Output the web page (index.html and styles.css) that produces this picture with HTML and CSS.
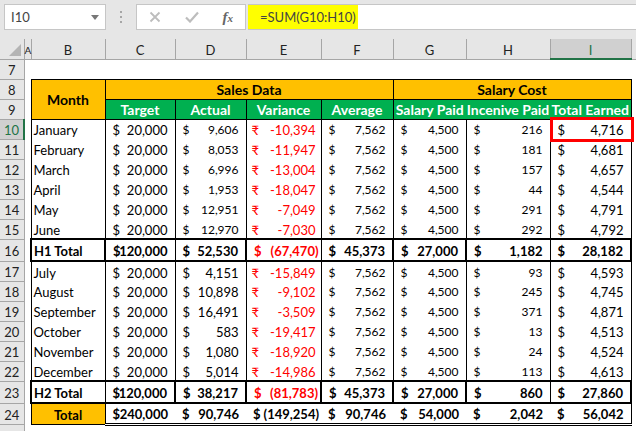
FILE: index.html
```
<!DOCTYPE html>
<html lang="en">
<head>
<meta charset="utf-8">
<title>Salary sheet</title>
<link rel="stylesheet" href="styles.css">
</head>
<body>
<header class="bar">
  <div class="namebox">
    <input class="name" type="text" value="I10" aria-label="Name box">
    <button class="drop" type="button" aria-label="Show names"><svg width="8" height="5" viewBox="0 0 8 5"><path d="M0 0h8L4 5z" fill="#777"/></svg></button>
  </div>
  <svg class="dots" width="3" height="12" viewBox="0 0 3 12"><path d="M0 0h2v2H0zM0 5h2v2H0zM0 10h2v2H0z" fill="#a6a6a6"/></svg>
  <div class="tools">
    <button type="button" aria-label="Cancel"><svg width="12" height="12" viewBox="0 0 12 12"><path d="M1.500 1.500l9 9M10.500 1.500l-9 9" stroke="#bdbdbd" stroke-width="1.800" fill="none"/></svg></button>
    <button type="button" aria-label="Enter"><svg width="14" height="12" viewBox="0 0 14 12"><path d="M1 6.500l4 4L13 1.500" stroke="#bdbdbd" stroke-width="2.200" fill="none"/></svg></button>
    <button class="fx" type="button" aria-label="Insert function"><i>f</i><i class="x">x</i></button>
  </div>
  <div class="formula"><input type="text" value="=SUM(G10:H10)" aria-label="Formula bar"></div>
</header>
<main>
<table class="sheet">
  <colgroup><col class="cn"><col class="ca"><col class="cb"><col class="cc"><col class="cd"><col class="ce"><col class="cf"><col class="cg"><col class="ch"><col class="ci"><col></colgroup>
  <thead>
    <tr class="letters"><th class="corner"><svg width="12" height="12" viewBox="0 0 12 12"><path d="M12 0v12H0z" fill="#b4b4b4"/></svg></th><th class="a">A</th><th>B</th><th>C</th><th>D</th><th>E</th><th>F</th><th>G</th><th>H</th><th class="active">I</th><th class="end"></th></tr>
  </thead>
  <tbody>
    <tr><th>7</th><td></td><td colspan="8"></td><td></td></tr>
    <tr class="group"><th>8</th><td></td><td class="gold" rowspan="2">Month</td><td class="gold" colspan="4">Sales Data</td><td class="gold" colspan="3">Salary Cost</td><td></td></tr>
    <tr class="heads"><th>9</th><td></td><td class="green">Target</td><td class="green">Actual</td><td class="green">Variance</td><td class="green">Average</td><td class="green">Salary Paid</td><td class="green open">Incenive Paid</td><td class="green open">Total Earned</td><td></td></tr>
    <tr class="data"><th class="active">10</th><td></td><td>January</td><td><span>$</span>20,000</td><td class="s"><span>$</span>9,606</td><td class="v"><span>₹</span>-10,394</td><td class="s"><span>$</span>7,562</td><td class="s"><span>$</span>4,500</td><td class="s"><span>$</span>216</td><td class="selected"><span>$</span>4,716</td><td></td></tr>
    <tr class="data"><th>11</th><td></td><td>February</td><td><span>$</span>20,000</td><td class="s"><span>$</span>8,053</td><td class="v"><span>₹</span>-11,947</td><td class="s"><span>$</span>7,562</td><td class="s"><span>$</span>4,500</td><td class="s"><span>$</span>181</td><td><span>$</span>4,681</td><td></td></tr>
    <tr class="data"><th>12</th><td></td><td>March</td><td><span>$</span>20,000</td><td class="s"><span>$</span>6,996</td><td class="v"><span>₹</span>-13,004</td><td class="s"><span>$</span>7,562</td><td class="s"><span>$</span>4,500</td><td class="s"><span>$</span>157</td><td><span>$</span>4,657</td><td></td></tr>
    <tr class="data"><th>13</th><td></td><td>April</td><td><span>$</span>20,000</td><td class="s"><span>$</span>1,953</td><td class="v"><span>₹</span>-18,047</td><td class="s"><span>$</span>7,562</td><td class="s"><span>$</span>4,500</td><td class="s"><span>$</span>44</td><td><span>$</span>4,544</td><td></td></tr>
    <tr class="data"><th>14</th><td></td><td>May</td><td><span>$</span>20,000</td><td class="s"><span>$</span>12,951</td><td class="v"><span>₹</span>-7,049</td><td class="s"><span>$</span>7,562</td><td class="s"><span>$</span>4,500</td><td class="s"><span>$</span>291</td><td><span>$</span>4,791</td><td></td></tr>
    <tr class="data"><th>15</th><td></td><td>June</td><td><span>$</span>20,000</td><td class="s"><span>$</span>12,970</td><td class="v"><span>₹</span>-7,030</td><td class="s"><span>$</span>7,562</td><td class="s"><span>$</span>4,500</td><td class="s"><span>$</span>292</td><td><span>$</span>4,792</td><td></td></tr>
    <tr class="data total"><th>16</th><td></td><td class="l r">H1 Total</td><td><span>$</span>120,000</td><td class="r"><span>$</span>52,530</td><td class="v"><span>$</span>(67,470)</td><td class="r"><span>$</span>45,373</td><td class="r"><span>$</span>27,000</td><td><span>$</span>1,182</td><td class="r"><span>$</span>28,182</td><td></td></tr>
    <tr class="data"><th>17</th><td></td><td>July</td><td><span>$</span>20,000</td><td><span>$</span>4,151</td><td class="v"><span>₹</span>-15,849</td><td class="s"><span>$</span>7,562</td><td class="s"><span>$</span>4,500</td><td class="s"><span>$</span>93</td><td><span>$</span>4,593</td><td></td></tr>
    <tr class="data"><th>18</th><td></td><td>August</td><td><span>$</span>20,000</td><td><span>$</span>10,898</td><td class="v"><span>₹</span>-9,102</td><td class="s"><span>$</span>7,562</td><td class="s"><span>$</span>4,500</td><td class="s"><span>$</span>245</td><td><span>$</span>4,745</td><td></td></tr>
    <tr class="data"><th>19</th><td></td><td>September</td><td><span>$</span>20,000</td><td><span>$</span>16,491</td><td class="v"><span>₹</span>-3,509</td><td class="s"><span>$</span>7,562</td><td class="s"><span>$</span>4,500</td><td class="s"><span>$</span>371</td><td><span>$</span>4,871</td><td></td></tr>
    <tr class="data"><th>20</th><td></td><td>October</td><td><span>$</span>20,000</td><td><span>$</span>583</td><td class="v"><span>₹</span>-19,417</td><td class="s"><span>$</span>7,562</td><td class="s"><span>$</span>4,500</td><td class="s"><span>$</span>13</td><td><span>$</span>4,513</td><td></td></tr>
    <tr class="data"><th>21</th><td></td><td>November</td><td><span>$</span>20,000</td><td><span>$</span>1,080</td><td class="v"><span>₹</span>-18,920</td><td class="s"><span>$</span>7,562</td><td class="s"><span>$</span>4,500</td><td class="s"><span>$</span>24</td><td><span>$</span>4,524</td><td></td></tr>
    <tr class="data"><th>22</th><td></td><td>December</td><td><span>$</span>20,000</td><td><span>$</span>5,014</td><td class="v"><span>₹</span>-14,986</td><td class="s"><span>$</span>7,562</td><td class="s"><span>$</span>4,500</td><td class="s"><span>$</span>113</td><td><span>$</span>4,613</td><td></td></tr>
    <tr class="data total"><th>23</th><td></td><td class="l">H2 Total</td><td class="r"><span>$</span>120,000</td><td class="r"><span>$</span>38,217</td><td class="v r"><span>$</span>(81,783)</td><td class="r"><span>$</span>45,373</td><td class="r"><span>$</span>27,000</td><td><span>$</span>860</td><td class="r"><span>$</span>27,860</td><td></td></tr>
    <tr class="data grand"><th>24</th><td></td><td class="gold">Total</td><td><span>$</span>240,000</td><td><span>$</span>90,746</td><td class="g"><span>$</span>(149,254)</td><td><span>$</span>90,746</td><td><span>$</span>54,000</td><td><span>$</span>2,042</td><td class="last"><span>$</span>56,042</td><td></td></tr>
    <tr><th></th><td></td><td colspan="8"></td><td></td></tr>
  </tbody>
</table>
</main>
</body>
</html>
```
FILE: styles.css
```
* { box-sizing: border-box; }
body {
  margin: 0;
  height: 100vh;
  overflow: hidden;
  background: #fff;
  color: #000;
  font: 13px/16px Lato, "Liberation Sans", sans-serif;
}
button, input {
  border: 0;
  padding: 0;
  background: none;
  font: inherit;
  color: #444;
}
.bar {
  display: flex;
  align-items: center;
  height: 39px;
  padding: 4px 0 9px 4px;
  background: #e6e6e6;
}
.namebox, .tools, .formula {
  display: flex;
  align-items: center;
  height: 26px;
  background: #fff;
  border: 1px solid #c6c6c6;
}
.namebox { width: 102px; padding: 0 6px; }
.name { flex: 1; min-width: 0; }
.drop { display: flex; }
.dots { margin: 0 13px 0 14px; }
.tools {
  width: 110px;
  justify-content: space-between;
  padding: 0 12px;
}
.tools button { display: flex; align-items: center; }
.tools .fx {
  align-items: baseline;
  color: #666;
  font: bold 15px/16px "Liberation Serif", serif;
}
.fx .x { font-size: 11px; }
.formula {
  flex: 1;
  margin-left: 2px;
  border-right: 0;
  border-left: 0;
}
.formula input {
  width: 110px;
  height: 24px;
  padding-left: 12px;
  background: #ff0;
}

.sheet {
  width: 100%;
  table-layout: fixed;
  border-collapse: collapse;
  white-space: nowrap;
}
.cn { width: 24px; }
.ca { width: 7px; }
.cb { width: 74px; }
.cc { width: 70px; }
.cd { width: 71px; }
.ce { width: 75px; }
.cf { width: 72px; }
.cg { width: 73px; }
.ch { width: 84px; }
.ci { width: 81px; }
.sheet tr { height: 20px; }
.sheet th, .sheet td { padding: 2px 0 0; }
.sheet th {
  background: #e6e6e6;
  border: 1px solid #a6a6a6;
  border-left: 0;
  font-weight: normal;
  color: #222;
}
.letters th { border-top: 0; }
.letters .corner { text-align: right; padding-right: 3px; }
.corner svg { display: block; margin-left: auto; }
.letters .a { font-size: 10px; }
.letters .end { border-right: 0; }
.sheet th.active { background: #d0d0d0; color: #217346; }
.letters .active { border-bottom: 2px solid #217346; }
.data .active { border-right: 2px solid #217346; }

.gold, .green {
  border: 1px solid #000;
  text-align: center;
  font-weight: bold;
}
.gold { background: #ffc000; }
.green { background: #00b050; color: #fff; }
.group td, .heads td { font-size: 14px; }
.heads .open { border-left: 0; }
.heads .green:nth-child(7) { border-right: 0; }
.heads .green:nth-child(8) { border-right: 0; }

.data td:nth-child(n+3):nth-child(-n+10) {
  padding: 2px 7px 0;
  border-left: 1px solid #000;
  border-right: 1px solid #000;
  text-align: right;
}
.data td:nth-child(3):nth-child(-n+10) { padding: 2px 2px 0; text-align: left; }
.data td span { float: left; margin-right: -12px; }
.data .s { font-size: 12px; }
.data td.v:nth-child(n+3):nth-child(-n+10) { padding: 2px 5px 0; color: #f00; }

.total, .grand { font-weight: bold; }
.sheet .total { height: 22px; }
.sheet .grand { height: 21px; }
.data.total td:nth-child(n+3):nth-child(-n+10) {
  border-top: 2px solid #000;
  border-bottom: 2px solid #000;
}
.data.total td.l:nth-child(n+3):nth-child(-n+10) { border-left: 2px solid #000; }
.data.total td.r:nth-child(n+3):nth-child(-n+10) { border-right: 2px solid #000; }
.data.total td.v:nth-child(n+3):nth-child(-n+10) { padding: 2px 2px 0 7px; }
.data.grand td:nth-child(n+4):nth-child(-n+10) {
  border-left: 0;
  border-right: 0;
  border-bottom: 3px double #000;
}
.data.grand td.gold:nth-child(3):nth-child(-n+10) { text-align: center; border-bottom: 1px solid #000; }
.data.grand td.g:nth-child(n+4):nth-child(-n+10) { padding: 2px 2px 0 7px; }
.data.grand td.last:nth-child(n+4):nth-child(-n+10) { border-right: 1px solid #000; }

.selected { position: relative; }
.selected::after {
  content: "";
  position: absolute;
  inset: -3px -3px -3px -1px;
  border: 3px solid #f00;
}
```
